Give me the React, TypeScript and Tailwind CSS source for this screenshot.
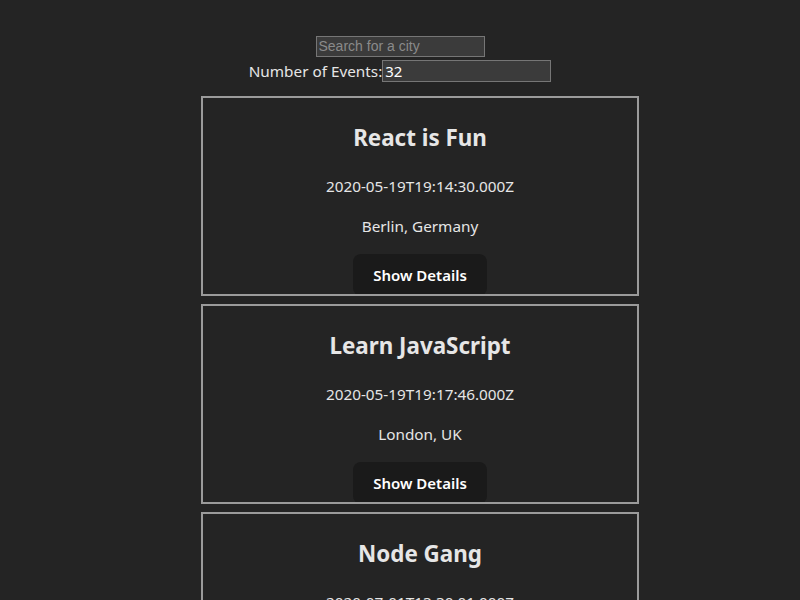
const events = [
  { id: 1, summary: "React is Fun", start: "2020-05-19T19:14:30.000Z", location: "Berlin, Germany" },
  { id: 2, summary: "Learn JavaScript", start: "2020-05-19T19:17:46.000Z", location: "London, UK" },
  { id: 3, summary: "Node Gang", start: "2020-07-01T13:30:01.000Z", location: "Santiago, Chile" },
];

const inputClass =
  "w-[169px] px-[2px] bg-[#3b3b3b] border border-[#767676] text-white placeholder:text-[#8a8a8a] outline-none";

export default function App() {
  return (
    <div
      className="min-h-screen bg-[#242424] text-[#e6e6e6] text-[15.3px] pt-[34px] pb-8"
      style={{ fontFamily: '"Noto Sans", "Open Sans", sans-serif' }}
    >
      <div className="flex justify-center items-center h-6">
        <input
          type="text"
          placeholder="Search for a city"
          className={inputClass + " h-[21px] text-[14px]"}
          style={{ fontFamily: '"Liberation Sans", Arial, sans-serif' }}
        />
      </div>
      <div className="flex justify-center items-center h-6 mt-px">
        <label htmlFor="num">Number of Events:</label>
        <input id="num" type="text" defaultValue="32" className={inputClass + " h-[22px] text-[15px] leading-5"} />
      </div>

      <ul className="mx-auto w-[478px] pl-10 mt-[13px] flex flex-col gap-2">
        {events.map((event) => (
          <li
            key={event.id}
            className="border-2 border-[#9b9b9b] h-[200px] overflow-hidden flex flex-col items-center text-center"
          >
            <h2 className="text-[22.4px] font-bold leading-9 mt-[22px]">{event.summary}</h2>
            <p className="leading-6 mt-[18px]">{event.start}</p>
            <p className="leading-6 mt-4">{event.location}</p>
            <button className="mt-4 h-[42px] px-5 rounded-lg bg-[#1a1a1a] text-white text-[15px] font-semibold shrink-0">
              Show Details
            </button>
          </li>
        ))}
      </ul>
    </div>
  );
}
